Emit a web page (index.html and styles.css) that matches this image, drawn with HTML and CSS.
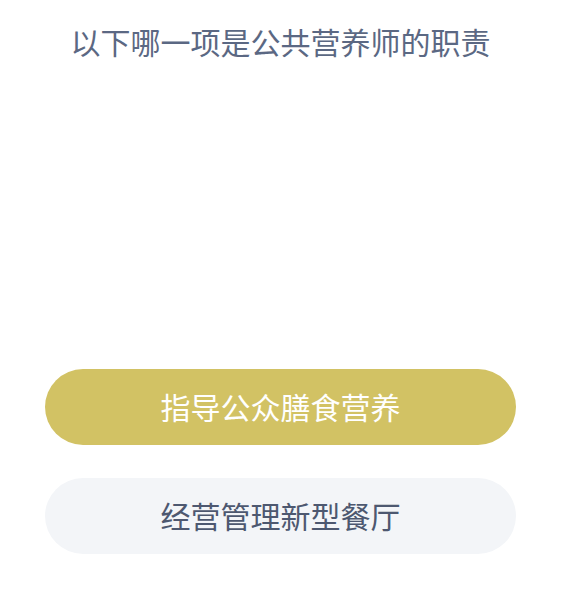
FILE: index.html
```html
<!DOCTYPE html>
<html lang="zh-CN">
<head>
<meta charset="utf-8" />
<meta name="viewport" content="width=device-width, initial-scale=1" />
<title>答题</title>
<link rel="stylesheet" href="styles.css">
</head>
<body>
<div class="quiz">
  <h1 class="question">以下哪一项是公共营养师的职责</h1>
  <div class="options">
    <button class="option option-active" type="button">指导公众膳食营养</button>
    <button class="option" type="button">经营管理新型餐厅</button>
  </div>
</div>
</body>
</html>
```
FILE: styles.css
```css
:root {
  --bg: #ffffff;
  --text: #5b6883;
  --accent: #d2c264;
  --option-bg: #f3f5f8;
  --option-text: #4d5870;
}
*{box-sizing:border-box;margin:0;padding:0;}
body{
  background:var(--bg);
  font-family:"Noto Sans CJK SC","Noto Sans",sans-serif;
}
.quiz{
  width:567px;
  height:603px;
  padding-top:21px;
  display:flex;
  flex-direction:column;
}
.question{
  font-size:30px;
  line-height:40px;
  font-weight:400;
  color:var(--text);
  text-align:center;
  padding-right:6px;
}
.options{
  margin-top:308px;
  padding-left:45px;
  display:flex;
  flex-direction:column;
  gap:33px;
}
.option{
  width:471px;
  height:76px;
  padding-bottom:3px;
  border:none;
  border-radius:38px;
  background:var(--option-bg);
  color:var(--option-text);
  font-family:inherit;
  font-size:30px;
  font-weight:400;
  cursor:pointer;
}
.option-active{
  background:var(--accent);
  color:#ffffff;
}
```
